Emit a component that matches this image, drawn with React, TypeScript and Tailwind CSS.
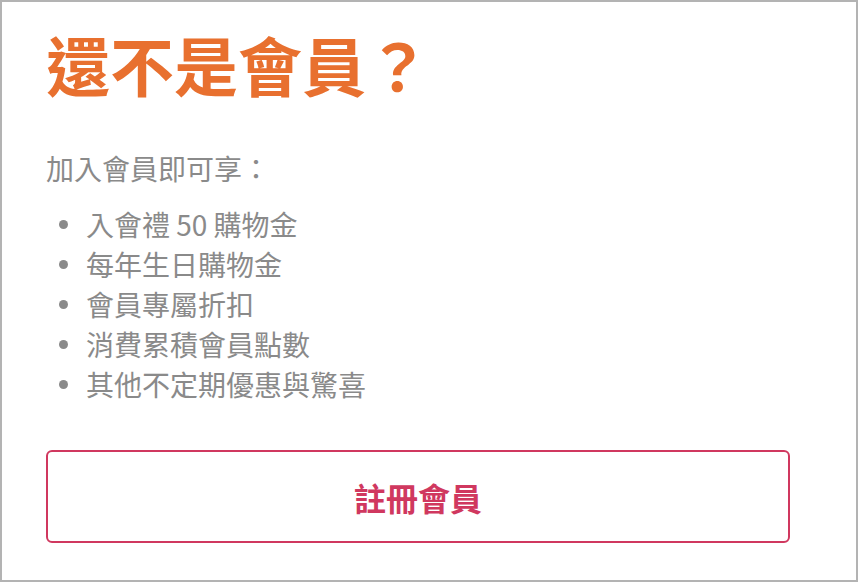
import React from "react"

const perks = [
  "入會禮 50 購物金",
  "每年生日購物金",
  "會員專屬折扣",
  "消費累積會員點數",
  "其他不定期優惠與驚喜",
]

const cjk = { fontFamily: '"Noto Sans CJK TC", "Noto Sans", sans-serif' }

export default function App() {
  return (
    <div
      className="h-[582px] w-[858px] border-2 border-[#b3b3b3] bg-white pl-[44px] pt-[21px]"
      style={cjk}
    >
      <h2 className="text-[64px] leading-[80px] font-bold text-[#e8702f]">
        還不是會員？
      </h2>

      <p className="mt-[45px] text-[28px] leading-[40px] text-[#8a8a8a]">
        加入會員即可享：
      </p>

      <ul className="mt-[16px] text-[28px] leading-[40px] text-[#8a8a8a]">
        {perks.map((perk) => (
          <li key={perk} className="flex items-center">
            <span className="ml-[13px] mr-[18px] h-[9px] w-[9px] rounded-full bg-[#8a8a8a]" />
            {perk}
          </li>
        ))}
      </ul>

      <button
        type="button"
        className="mt-[46px] flex h-[93px] w-[744px] items-center justify-center rounded-md border-2 border-[#d0385f] text-[32px] font-bold text-[#d0385f]"
      >
        註冊會員
      </button>
    </div>
  )
}
